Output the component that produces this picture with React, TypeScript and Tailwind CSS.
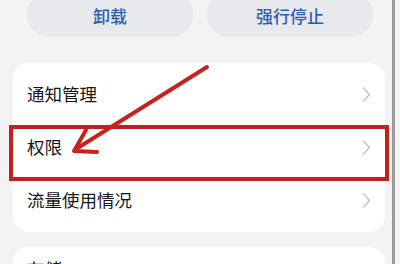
const rows = ['通知管理', '权限', '流量使用情况']

function Chevron() {
  return (
    <svg width="9" height="15" viewBox="0 0 9 15" fill="none">
      <polyline points="1.5,1 7.5,7.5 1.5,14" stroke="#c4c4c4" strokeWidth="1.5" strokeLinecap="round" strokeLinejoin="round" />
    </svg>
  )
}

export default function App() {
  return (
    <div
      className="relative flex w-[400px] h-[264px] overflow-hidden bg-[#f2f3f5]"
      style={{ fontFamily: '"Noto Sans CJK SC", "Noto Sans", sans-serif' }}
    >
      <div className="w-[392px] flex flex-col">
        <div className="flex gap-[14px] pl-[27px] mt-[-8px]">
          <div className="w-[166px] h-[45px] rounded-[22px] bg-[#e7e9ec] flex items-center justify-center pt-[2px] text-[17px] font-medium text-[#2e5db0]">
            卸载
          </div>
          <div className="w-[166px] h-[45px] rounded-[22px] bg-[#e7e9ec] flex items-center justify-center pt-[2px] text-[17px] font-medium text-[#2e5db0]">
            强行停止
          </div>
        </div>

        <div className="ml-[13px] w-[372px] mt-[26px] rounded-[16px] bg-white py-[5px]">
          {rows.map((r) => (
            <div key={r} className="h-[53px] flex items-center justify-between pl-[14px] pr-[14px]">
              <span className="text-[17.5px] text-[#161616]">{r}</span>
              <Chevron />
            </div>
          ))}
        </div>

        <div className="ml-[13px] w-[372px] mt-[15px] rounded-[16px] bg-white h-[60px] pl-[14px] pt-[9px]">
          <span className="text-[17.5px] text-[#161616]">存储</span>
        </div>
      </div>
      <div className="w-[3px] bg-[#9b9b9b]" />
      <div className="flex-1 bg-[#f4f4f4]" />

      <div className="absolute left-[9px] top-[125px] w-[380px] h-[56px] border-[4px] border-[#c21f1d]" />

      <svg className="absolute inset-0" width="400" height="264" viewBox="0 0 400 264">
        <g stroke="#c62220" strokeWidth="4" strokeLinecap="round" strokeLinejoin="round" fill="none">
          <line x1="207" y1="67" x2="76" y2="149" />
          <polyline points="86,130 74,151 97,152" />
        </g>
      </svg>
    </div>
  )
}
